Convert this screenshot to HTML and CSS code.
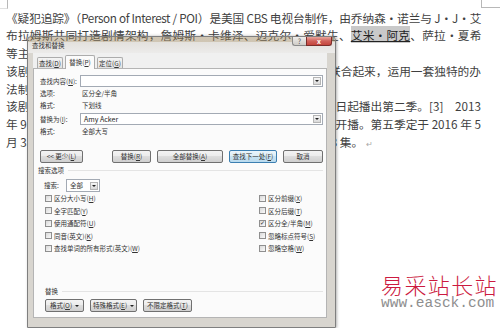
FILE: index.html
```html
<!DOCTYPE html>
<html lang="zh-CN">

<head>
    <meta charset="UTF-8">
    <meta name="viewport" content="width=device-width, initial-scale=1.0">
    <title>查找和替换</title>
    <link rel="stylesheet" href="styles.css">
</head>

<body>
    <div class="page">
        <!-- документ -->
        <div class="doc">
            <div class="ln full">《疑犯追踪》（Person of Interest / POI）是美国 CBS 电视台制作，由乔纳森・诺兰与 J・J・艾</div>
            <div class="ln full">布拉姆斯共同打造剧情架构，詹姆斯・卡维泽、迈克尔・爱默生、<span class="hit">艾米・阿克</span>、萨拉・夏希</div>
            <div class="ln">等主演。</div>
            <div class="ln split"><span>该剧讲述了前中情局特工约翰・里斯与亿万富翁哈罗德・芬奇</span><span>联合起来，运用一套独特的办</span></div>
            <div class="ln">法制止犯罪的故事。</div>
            <div class="ln split"><span>该剧于 2011 年 9 月 22 日首播，2012 年 9 月 27</span><span>日起播出第二季。[3]　2013</span></div>
            <div class="ln split"><span>年 9 月 24 日第三季开播，2014 年 9 月 23 日第四季</span><span>开播。第五季定于 2016 年 5</span></div>
            <div class="ln">月 3 日播出第四季最终集，第五季为该剧最后一季，全季共计 13 集。<span class="pm">↵</span></div>
        </div>

        <!-- окно "查找和替换" -->
        <div class="dlg">
            <div class="dlg-title">
                <span>查找和替换</span>
                <div class="caps">
                    <span class="cap help">?</span>
                    <span class="cap close">x</span>
                </div>
            </div>
            <div class="dlg-body">
                <div class="tabs">
                    <span class="tab"><span>查找(<u>D</u>)</span></span>
                    <span class="tab on"><span>替换(<u>P</u>)</span></span>
                    <span class="tab"><span>定位(<u>G</u>)</span></span>
                </div>
                <div class="panel">
                    <div class="field">
                        <label>查找内容(<u>N</u>):</label>
                        <div class="combo"><span></span><i class="drop"></i></div>
                    </div>
                    <div class="info"><span class="lbl">选项:</span><span>区分全/半角</span></div>
                    <div class="info"><span class="lbl">格式:</span><span>下划线</span></div>
                    <div class="field gap">
                        <label>替换为(<u>I</u>):</label>
                        <div class="combo"><span class="val">Amy Acker</span><i class="drop"></i></div>
                    </div>
                    <div class="info"><span class="lbl">格式:</span><span>全部大写</span></div>

                    <div class="btns">
                        <button class="b-less">&lt;&lt; 更少(<u>L</u>)</button>
                        <button class="b-rep">替换(<u>R</u>)</button>
                        <button class="b-all">全部替换(<u>A</u>)</button>
                        <button class="b-next">查找下一处(<u>F</u>)</button>
                        <button class="b-cancel">取消</button>
                    </div>

                    <div class="group"><span>搜索选项</span></div>
                    <div class="scope">
                        <span>搜索:</span>
                        <div class="select"><span>全部</span><i class="drop"></i></div>
                    </div>

                    <div class="checks">
                        <div class="chk"><span class="box"></span><span>区分大小写(<u>H</u>)</span></div>
                        <div class="chk"><span class="box"></span><span>全字匹配(<u>Y</u>)</span></div>
                        <div class="chk"><span class="box"></span><span>使用通配符(<u>U</u>)</span></div>
                        <div class="chk"><span class="box"></span><span>同音(英文)(<u>K</u>)</span></div>
                        <div class="chk"><span class="box"></span><span>查找单词的所有形式(英文)(<u>W</u>)</span></div>
                        <div class="chk"><span class="box"></span><span>区分前缀(<u>X</u>)</span></div>
                        <div class="chk"><span class="box"></span><span>区分后缀(<u>T</u>)</span></div>
                        <div class="chk"><span class="box on">✓</span><span>区分全/半角(<u>M</u>)</span></div>
                        <div class="chk"><span class="box"></span><span>忽略标点符号(<u>S</u>)</span></div>
                        <div class="chk"><span class="box"></span><span>忽略空格(<u>W</u>)</span></div>
                    </div>

                    <div class="group end"><span>替换</span></div>
                    <div class="btns2">
                        <button class="b-fmt">格式(<u>O</u>)<i class="caret"></i></button>
                        <button class="b-spec">特殊格式(<u>E</u>)<i class="caret"></i></button>
                        <button class="b-none">不限定格式(<u>T</u>)</button>
                    </div>
                </div>
            </div>
        </div>

        <!-- водяной знак -->
        <div class="mark">
            <div class="mark-cn">易采站长站</div>
            <div class="mark-en">www.easck.com</div>
        </div>
    </div>
</body>

</html>
```

FILE: styles.css
```css
* {
    box-sizing: border-box;
}

body {
    margin: 0;
    background: #fff;
}

.page {
    position: relative;
    width: 500px;
    height: 328px;
    overflow: hidden;
    font-family: "Noto Sans CJK SC", sans-serif;
}

/* уголки полей страницы */
.page::before {
    content: "";
    position: absolute;
    left: 0;
    top: 0;
    width: 7px;
    height: 8px;
    border-right: 1px solid #b8b8b8;
    border-bottom: 1px solid #e0e0e0;
}

.page::after {
    content: "";
    position: absolute;
    left: 481px;
    top: 0;
    width: 19px;
    height: 7px;
    border-left: 1px solid #b8b8b8;
    border-bottom: 1px solid #b8b8b8;
}

.doc {
    width: 481px;
    padding: 8.5px 0 0 6px;
    font-size: 11.7px;
    color: #3f3f3f;
}

.ln {
    height: 17.8px;
    line-height: 17.8px;
    white-space: nowrap;
}

.full {
    white-space: normal;
    letter-spacing: -0.4px;
    text-align: justify;
    text-align-last: justify;
}

.split {
    display: flex;
    justify-content: space-between;
}

.hit {
    background: #c9c9c9;
    color: #222;
    text-decoration: underline;
}

.pm {
    margin-left: 3px;
    font-size: 8px;
    color: #a8a8a8;
}

/* окно */
.dlg {
    position: absolute;
    left: 27px;
    top: 36px;
    width: 309px;
    height: 292px;
    display: flex;
    flex-direction: column;
    border: 1px solid #7f7f7f;
    border-radius: 4px 4px 0 0;
    background: linear-gradient(to bottom, rgba(150, 128, 88, .45) 0, rgba(150, 128, 88, .45) 5px, #d8d5cf 5px);
    box-shadow: 1px 0 3px rgba(0, 0, 0, .3);
    font: 6.5px/1 "Noto Sans CJK SC", sans-serif;
    color: #333;
}

.dlg-title {
    flex: none;
    height: 16px;
    display: flex;
    align-items: center;
    padding-left: 4px;
    background: linear-gradient(to bottom, transparent 0, transparent 5px, #e3e1dd 5px, #ecebea 100%);
}

.caps {
    display: flex;
    align-self: flex-start;
    margin-left: auto;
    margin-right: 3px;
}

.cap {
    height: 9px;
    display: flex;
    align-items: center;
    justify-content: center;
    font-size: 7px;
}

.help {
    width: 14px;
    border: 1px solid #8a8a8a;
    border-top: 0;
    border-right: 0;
    border-radius: 0 0 0 3px;
    background: linear-gradient(#efeeec, #cfccc7);
    color: #555;
}

.close {
    width: 26px;
    border: 1px solid #7b2d2a;
    border-top: 0;
    border-radius: 0 0 3px 0;
    background: linear-gradient(#e9a79d, #d0615a 50%, #c4453d);
    color: #fff;
    font-weight: bold;
}

.dlg-body {
    flex: 1;
    display: flex;
    flex-direction: column;
    margin: 0 8px 9px 5px;
    background: #f0f0f0;
}

.tabs {
    flex: none;
    height: 15px;
    display: flex;
    align-items: flex-end;
    gap: 2px;
    padding-left: 4px;
}

.tab {
    width: 26px;
    height: 11px;
    display: flex;
    align-items: center;
    justify-content: center;
    border: 1px solid #acacac;
    border-bottom: 0;
    border-radius: 2px 2px 0 0;
    background: linear-gradient(#f4f4f4, #e2e2e2);
}

.tab.on {
    position: relative;
    z-index: 1;
    width: 30px;
    height: 14px;
    margin-bottom: -1px;
    background: #fbfbfb;
}

.panel {
    flex: 1;
    display: flex;
    flex-direction: column;
    padding: 6px 3px 5px 6px;
    border: 1px solid #b4b4b4;
    background: #fbfbfb;
}

.field {
    height: 12px;
    display: flex;
    align-items: center;
}

.field.gap {
    margin-top: 2px;
}

.field label {
    width: 40px;
}

.combo,
.select {
    height: 12px;
    display: flex;
    align-items: center;
    justify-content: space-between;
    padding-left: 3px;
    border: 1px solid #a3aab4;
    background: #fff;
}

.combo {
    flex: 1;
}

.val {
    font-size: 7px;
    color: #222;
}

.drop {
    width: 8px;
    height: 8px;
    margin-right: 1px;
    display: flex;
    align-items: center;
    justify-content: center;
    border: 1px solid #b5b5b5;
    background: linear-gradient(#f6f6f6, #d9d9d9);
}

.drop::after {
    content: "";
    border-left: 2px solid transparent;
    border-right: 2px solid transparent;
    border-top: 2px solid #222;
}

.info {
    height: 12px;
    display: flex;
    align-items: center;
}

.info .lbl {
    width: 42px;
}

button {
    height: 13px;
    padding: 0;
    font: inherit;
    color: inherit;
    border: 1px solid #707070;
    border-radius: 2px;
    background: linear-gradient(#f3f3f3 0, #ebebeb 50%, #dddddd 50%, #cfcfcf 100%);
}

.btns {
    height: 13px;
    display: flex;
    gap: 6px;
    margin-top: 13px;
}

.b-less {
    width: 43px;
}

.b-rep {
    width: 39px;
    margin-left: auto;
}

.b-all {
    width: 66px;
}

.b-next {
    width: 48px;
    border-color: #3c7fb1;
    background: linear-gradient(#eaf5fb 0, #dcedf6 50%, #c8e3f2 50%, #b9daee 100%);
}

.b-cancel {
    width: 40px;
}

.group {
    height: 10px;
    display: flex;
    align-items: center;
    margin-top: 2px;
    margin-left: -2px;
}

.group::after {
    content: "";
    flex: 1;
    height: 1px;
    margin-left: 4px;
    background: #e4e4e4;
}

.group.end {
    margin-top: auto;
    margin-left: 5px;
}

.scope {
    height: 13px;
    display: flex;
    align-items: center;
    margin-top: 4px;
    margin-left: 4px;
}

.scope > span {
    width: 22px;
}

.select {
    width: 34px;
    height: 13px;
}

.checks {
    display: grid;
    grid-template-columns: 214px auto;
    grid-template-rows: repeat(5, 12.5px);
    grid-auto-flow: column;
    margin-left: 5px;
}

.chk {
    display: flex;
    align-items: center;
    gap: 2px;
}

.box {
    width: 7px;
    height: 7px;
    display: flex;
    align-items: center;
    justify-content: center;
    border: 1px solid #8f8f8f;
    background: linear-gradient(135deg, #d9d9d9, #fafafa);
    font: 6px/1 "DejaVu Sans", sans-serif;
    color: #2a2a2a;
}

.btns2 {
    height: 13px;
    display: flex;
    gap: 6px;
    margin-top: 3px;
    margin-left: 5px;
}

.b-fmt {
    width: 39px;
}

.b-spec {
    width: 47px;
}

.b-none {
    width: 49px;
}

.caret {
    display: inline-block;
    margin-left: 3px;
    vertical-align: middle;
    border-left: 2px solid transparent;
    border-right: 2px solid transparent;
    border-top: 2px solid #222;
}

/* водяной знак */
.mark {
    position: absolute;
    left: 381px;
    top: 271px;
}

.mark-cn {
    font-size: 22px;
    font-weight: 300;
    line-height: 26px;
    letter-spacing: 1.4px;
    color: #cc1a40;
}

.mark-en {
    font: 14.5px/12px "Liberation Mono", monospace;
    color: #8e8e8e;
}
```
